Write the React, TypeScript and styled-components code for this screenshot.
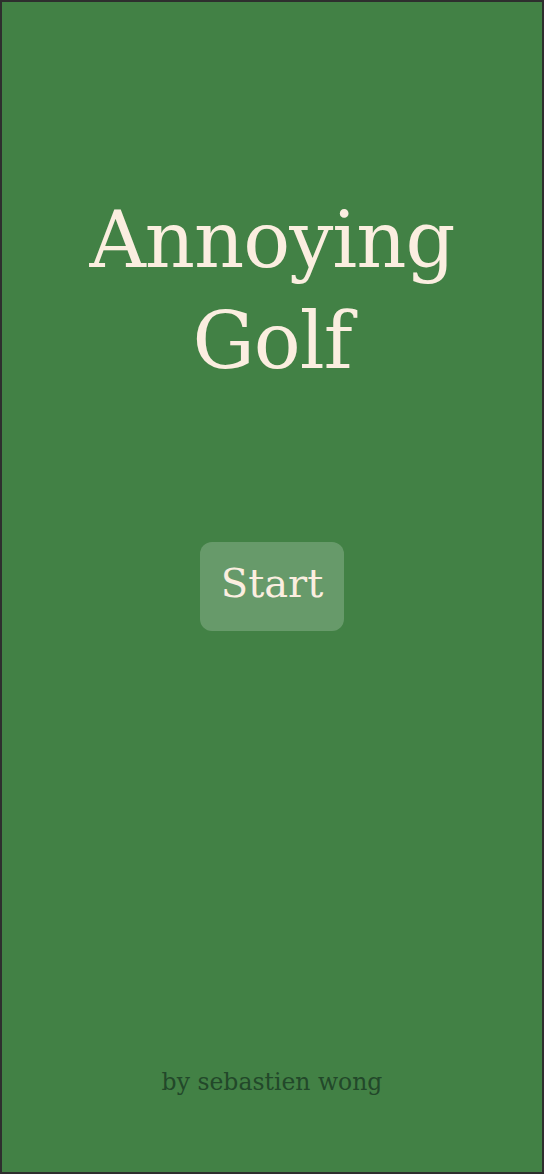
import React from "react";
import styled, { createGlobalStyle } from "styled-components";

const Global = createGlobalStyle`
  html, body { margin: 0; padding: 0; background: #428145; }
  * { box-sizing: border-box; }
`;

const Page = styled.div`
  width: 544px;
  height: 1174px;
  border: 2px solid #2e2e2e;
  background: #428145;
  display: flex;
  flex-direction: column;
  align-items: center;
  font-family: "DejaVu Serif", "Liberation Serif", serif;
  color: #fbeee0;
`;

const Title = styled.h1`
  margin: 188px 0 0;
  font-size: 78px;
  font-weight: normal;
  line-height: 101px;
  text-align: center;
  letter-spacing: -1px;
`;

const StartButton = styled.button`
  margin-top: 150px;
  width: 144px;
  height: 89px;
  padding: 0 0 8px;
  border: none;
  border-radius: 12px;
  background: rgba(255, 255, 255, 0.2);
  color: #fbeee0;
  font-family: inherit;
  font-size: 40px;
  cursor: pointer;
`;

const Footer = styled.div`
  margin-top: auto;
  margin-bottom: 76px;
  font-size: 23.5px;
  color: #22482a;
`;

export default function App() {
  return (
    <>
      <Global />
      <Page>
        <Title>
          Annoying
          <br />
          Golf
        </Title>
        <StartButton>Start</StartButton>
        <Footer>by sebastien wong</Footer>
      </Page>
    </>
  );
}
